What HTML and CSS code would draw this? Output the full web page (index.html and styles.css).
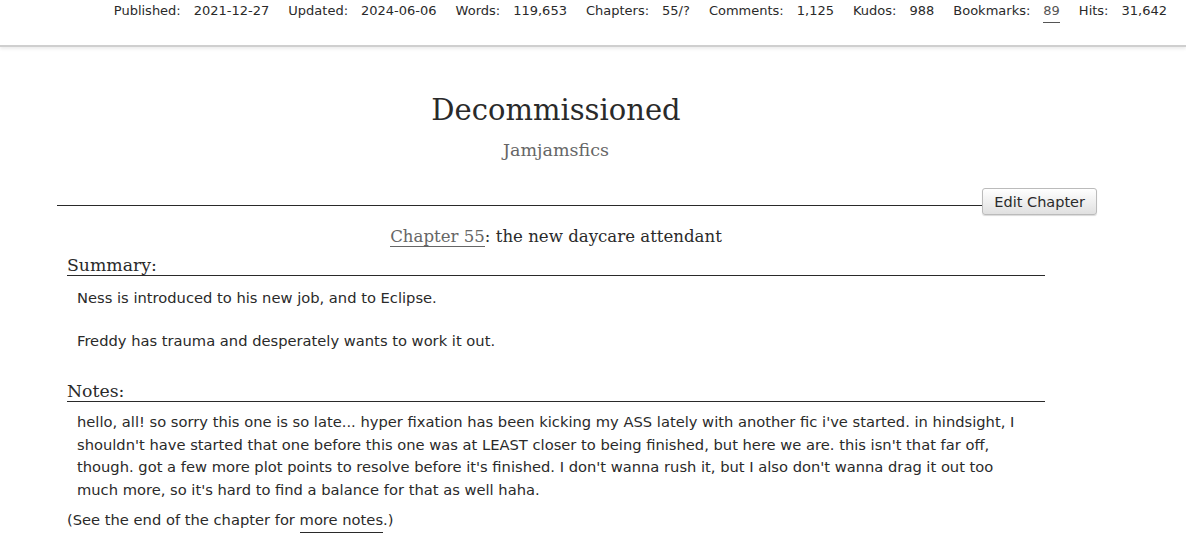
FILE: index.html
```html
<!DOCTYPE html>
<html lang="en">
<head>
    <meta charset="UTF-8">
    <title>Decommissioned - Chapter 55</title>
    <link rel="stylesheet" href="styles.css">
</head>
<body>

    <div class="stats-bar">
        <dl class="stats">
            <dt>Published:</dt><dd>2021-12-27</dd>
            <dt>Updated:</dt><dd>2024-06-06</dd>
            <dt>Words:</dt><dd>119,653</dd>
            <dt>Chapters:</dt><dd>55/?</dd>
            <dt>Comments:</dt><dd>1,125</dd>
            <dt>Kudos:</dt><dd>988</dd>
            <dt>Bookmarks:</dt><dd><a href="#">89</a></dd>
            <dt>Hits:</dt><dd>31,642</dd>
        </dl>
    </div>

    <div class="work">
        <div class="preface">
            <h2 class="title">Decommissioned</h2>
            <h3 class="byline"><a href="#">Jamjamsfics</a></h3>
        </div>

        <div class="chapter-top">
            <div class="rule"></div>
            <button class="edit-btn">Edit Chapter</button>
        </div>

        <div class="chapter">
            <h3 class="chapter-title"><a href="#">Chapter 55</a>: the new daycare attendant</h3>

            <div class="module">
                <h3 class="heading">Summary:</h3>
                <blockquote class="userstuff">
                    <p>Ness is introduced to his new job, and to Eclipse.</p>
                    <p>Freddy has trauma and desperately wants to work it out.</p>
                </blockquote>
            </div>

            <div class="module">
                <h3 class="heading">Notes:</h3>
                <blockquote class="userstuff">
                    <p>hello, all! so sorry this one is so late... hyper fixation has been kicking my ASS lately with another fic i've started. in hindsight, I shouldn't have started that one before this one was at LEAST closer to being finished, but here we are. this isn't that far off, though. got a few more plot points to resolve before it's finished. I don't wanna rush it, but I also don't wanna drag it out too much more, so it's hard to find a balance for that as well haha.</p>
                </blockquote>
                <p class="jump">(See the end of the chapter for <a href="#" class="more-link">more notes</a>.)</p>
            </div>
        </div>
    </div>

</body>
</html>
```

FILE: styles.css
```css
body { margin: 0; font-family: "DejaVu Sans", sans-serif; font-size: 14.7px; color: #2a2a2a; background: #fff; }
a { color: #2a2a2a; text-decoration: none; }

.stats-bar { height: 45px; border-bottom: 2px solid #cfcfcf; box-shadow: 0 2px 3px rgba(0,0,0,0.08); }
.stats { display: flex; justify-content: flex-end; margin: 0; padding: 2px 19px 0 0; font-size: 13px; line-height: 17px; }
.stats dt { margin: 0 13px 0 0; }
.stats dd { margin: 0 19px 0 0; }
.stats dd:last-child { margin-right: 0; }
.stats a { color: #555; border-bottom: 1px solid #555; padding-bottom: 4px; }

.work { width: 998px; margin: 0 0 0 57px; }

.preface { text-align: center; padding-top: 44px; }
.title { font-family: "DejaVu Serif", serif; font-weight: normal; font-size: 29px; margin: 0; line-height: 38px; }
.byline { font-family: "DejaVu Serif", serif; font-weight: normal; font-size: 17.5px; margin: 10px 0 0; line-height: 22px; }
.byline a { color: #666; }

.chapter-top { display: flex; align-items: flex-end; margin-top: 27px; width: 1040px; }
.rule { flex: 1; border-bottom: 1px solid #2a2a2a; margin-bottom: 9px; }
.edit-btn { font-family: "DejaVu Sans", sans-serif; font-size: 14.5px; color: #2a2a2a; padding: 2px 11px; height: 27px; border: 1px solid #bbb; border-radius: 3px; background: linear-gradient(#fff, #e0e0e0); box-shadow: 0 1px 1px rgba(0,0,0,0.15); }

.chapter-title { font-family: "DejaVu Serif", serif; font-weight: normal; font-size: 16.6px; text-align: center; margin: 10px 0 0; line-height: 24px; }
.chapter-title a { color: #666; border-bottom: 1px solid #666; }

.module { margin: 0 10px; }
.heading { font-family: "DejaVu Serif", serif; font-weight: normal; font-size: 17.3px; margin: 7px 0 0; line-height: 19px; border-bottom: 1px solid #2a2a2a; }
.userstuff { margin: 0; padding: 0 15px 0 10px; line-height: 22.5px; }
.userstuff p { margin: 11px 0 0; }
.userstuff p + p { margin-top: 20px; }
.module + .module .heading { margin-top: 30px; }
.module + .module .userstuff p { margin-top: 9px; }
.jump { margin: 8px 0 0; line-height: 22px; }
.more-link { display: inline-block; line-height: 17px; border-bottom: 1px solid #2a2a2a; padding-bottom: 4px; }
```
